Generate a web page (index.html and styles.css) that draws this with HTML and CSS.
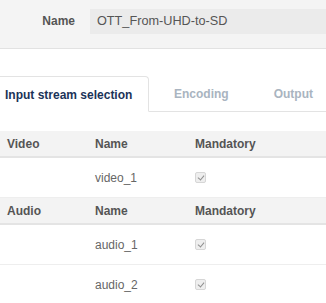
FILE: index.html
```html
<!DOCTYPE html>
<html>
<head>
  <meta charset="UTF-8">
  <title>Profile</title>
  <link rel="stylesheet" href="styles.css">
</head>
<body>
  <div class="name-bar">
    <label class="name-label" for="profile-name">Name</label>
    <input class="name-input" id="profile-name" type="text" value="OTT_From-UHD-to-SD">
  </div>

  <ul class="tabs">
    <li class="tab active">Input stream selection</li>
    <li class="tab">Encoding</li>
    <li class="tab">Output</li>
  </ul>

  <!-- streams -->
  <div class="streams">
    <div class="row head">
      <span>Video</span><span>Name</span><span>Mandatory</span>
    </div>
    <div class="row">
      <span></span><span>video_1</span><span><i class="check"></i></span>
    </div>
    <div class="row head">
      <span>Audio</span><span>Name</span><span>Mandatory</span>
    </div>
    <div class="row">
      <span></span><span>audio_1</span><span><i class="check"></i></span>
    </div>
    <div class="row">
      <span></span><span>audio_2</span><span><i class="check"></i></span>
    </div>
  </div>
</body>
</html>
```

FILE: styles.css
```css
body {
  margin: 0;
  background: #fff;
  font-family: "Liberation Sans", Arial, sans-serif;
  color: #555;
  overflow: hidden;
}

.name-bar {
  display: flex;
  align-items: center;
  height: 49px;
  padding-bottom: 6px;
  box-sizing: border-box;
  background: #f4f4f4;
  border-bottom: 1px solid #e2e2e2;
}

.name-label {
  width: 75px;
  padding-right: 15px;
  text-align: right;
  font-size: 12px;
  font-weight: bold;
  color: #555;
}

.name-input {
  flex: 1;
  min-width: 0;
  height: 25px;
  box-sizing: border-box;
  padding: 0 7px;
  border: none;
  background: #ebebeb;
  font-family: "Liberation Sans", Arial, sans-serif;
  font-size: 12.7px;
  color: #555;
  outline: none;
}

.tabs {
  display: flex;
  margin: 27px 0 0;
  padding: 0;
  list-style: none;
  border-bottom: 1px solid #e3e3e3;
}

.tab {
  height: 34px;
  line-height: 37px;
  font-size: 12px;
  font-weight: bold;
  color: #a9b4c0;
  margin-bottom: -1px;
}

.tab.active {
  width: 143px;
  padding-left: 5px;
  color: #1b3358;
  background: #fff;
  border: 1px solid #e3e3e3;
  border-left: none;
  border-bottom-color: #fff;
  border-top-right-radius: 4px;
}

.tab + .tab {
  padding-left: 25px;
}

.tab:nth-child(3) {
  padding-left: 45px;
}

.streams {
  margin-top: 19px;
}

.row {
  display: grid;
  grid-template-columns: 88px 100px 1fr;
  align-items: center;
  padding-left: 7px;
  height: 39px;
  font-size: 12px;
  color: #666;
  border-bottom: 1px solid #eee;
}

.row.head {
  height: 25px;
  font-weight: bold;
  color: #555;
  background: #f3f3f3;
  border-bottom: 2px solid #e4e4e4;
}

.check {
  display: block;
  width: 11px;
  height: 11px;
  box-sizing: border-box;
  border: 1px solid #d6d6d6;
  border-radius: 2px;
  background: #eee;
  position: relative;
}

.check::after {
  content: "";
  position: absolute;
  left: 3px;
  top: 1px;
  width: 3px;
  height: 5px;
  border: solid #8f8f8f;
  border-width: 0 1.5px 1.5px 0;
  transform: rotate(40deg);
}
```
